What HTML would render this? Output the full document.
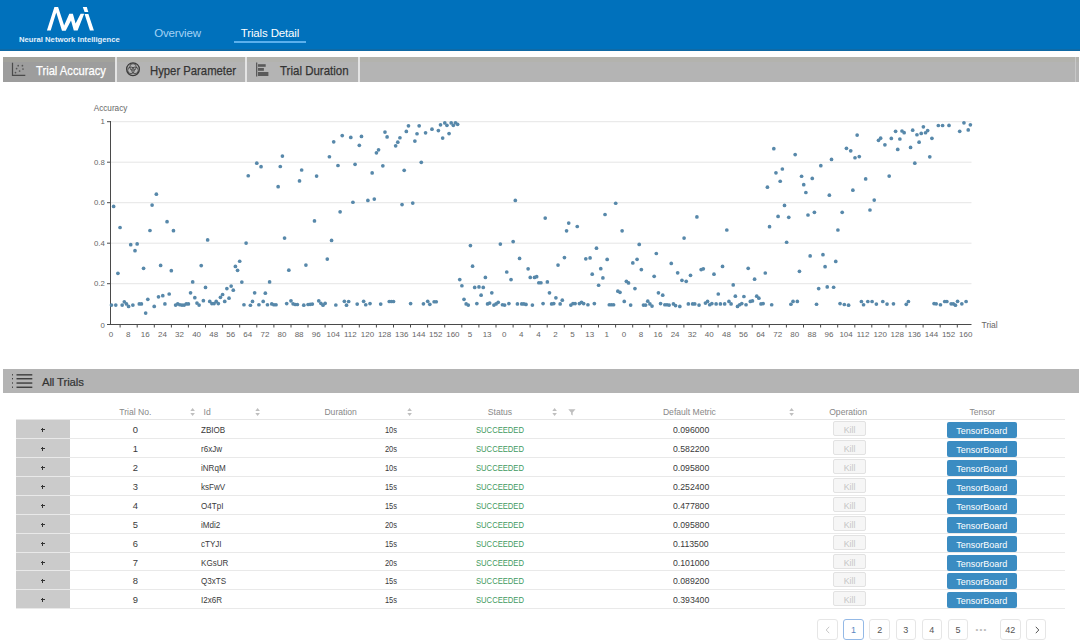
<!DOCTYPE html>
<html><head><meta charset="utf-8">
<style>
*{margin:0;padding:0;box-sizing:border-box}
html,body{width:1080px;height:641px;overflow:hidden;background:#fff;font-family:"Liberation Sans",sans-serif;color:#333}
.abs{position:absolute}
.nw{white-space:nowrap}
#hdr{position:absolute;left:0;top:0;width:1080px;height:50.5px;background:#0071bc}
.nav{position:absolute;top:24.8px;font-size:11.5px;line-height:16px;white-space:nowrap;letter-spacing:-0.15px}
#tabs{position:absolute;left:3px;top:57px;width:1076px;height:25px;background:#b4b4b4}
.tab{position:absolute;top:1px;height:25px;font-size:13.5px;line-height:25px;-webkit-text-stroke:0.25px currentColor;white-space:nowrap;color:#333;transform-origin:0 50%}
.sep{position:absolute;top:0;width:2px;height:25px;background:#e4e4e4}
#alltr{position:absolute;left:3px;top:369px;width:1075.5px;height:24px;background:#b4b4b4}
.th{position:absolute;top:404.7px;font-size:8.6px;line-height:14px;color:#888;white-space:nowrap}
.row{position:absolute;left:16px;width:1049px;border-bottom:1px solid #e9e9e9}
.plus{position:absolute;left:0;top:0;width:53.6px;background:#cbcbcb}
.plus:before{content:"";position:absolute;left:24.6px;top:9.3px;width:4.4px;height:1px;background:#333}
.plus:after{content:"";position:absolute;left:26.3px;top:7.7px;width:1px;height:4.2px;background:#333}
.td{position:absolute;top:0.55px;font-size:9.4px;line-height:18px;white-space:nowrap;color:#3a3a3a}
.suc{color:#3f9a60}
.kill{position:absolute;left:817.3px;top:1.1px;width:32.4px;height:15.4px;border:1px solid #e2e2e2;background:#f6f6f6;border-radius:2px;font-size:8.8px;line-height:16.2px;text-align:center;color:#c6c6c6}
.tb{position:absolute;left:930.7px;top:1.6px;width:70.1px;height:16.6px;background:#3b8cc2;border-radius:2px;font-size:9px;line-height:19.8px;text-align:center;color:#fff}
.pg{position:absolute;top:619.3px;width:20.5px;height:21px;border:1px solid #e6e6e6;border-radius:3px;font-size:9px;line-height:21px;text-align:center;color:#555;background:#fff}
</style></head>
<body>
<div id="hdr"></div><div class="abs" style="left:0;top:49px;width:1080px;height:1.5px;background:#0f6aa6"></div>
<svg class="abs" style="left:0;top:0" width="120" height="50" viewBox="0 0 120 50"><path fill="#fff" d="M46.9,30.5 L54.4,7.1 L58.1,7.1 L65.8,30.5 L61.9,30.5 L56.25,12.6 L50.7,30.5 Z"/><path fill="#fff" d="M61.9,30.5 L69.3,13.7 L72.9,13.7 L75.6,23.4 L80.6,13.7 L84.2,13.7 L77.6,30.5 L73.8,30.5 L71.0,20.6 L65.8,30.5 Z"/><path fill="#fff" d="M82.8,7.1 L86.8,7.1 L88.3,12.1 L84.6,12.1 Z"/><path fill="#fff" d="M84.6,13.9 L88.4,13.9 L93.9,30.5 L89.9,30.5 Z"/></svg>
<div class="abs nw" style="left:19px;top:33.5px;font-size:7.7px;font-weight:bold;color:#e3f0fb;line-height:11px">Neural Network Intelligence</div>
<div class="nav" style="left:154.2px;color:#a3d2f5">Overview</div>
<div class="nav" style="left:240.8px;color:#fff">Trials Detail</div>
<div class="abs" style="left:234.2px;top:41.3px;width:71.6px;height:2px;background:#5cb0ec"></div>
<svg class="abs" style="left:0;top:0" width="1080" height="360" viewBox="0 0 1080 360">
<g stroke="#e5e5e5" stroke-width="1">
<line x1="111" y1="121.7" x2="971.5" y2="121.7"/>
<line x1="111" y1="162.2" x2="971.5" y2="162.2"/>
<line x1="111" y1="202.7" x2="971.5" y2="202.7"/>
<line x1="111" y1="243.2" x2="971.5" y2="243.2"/>
<line x1="111" y1="283.7" x2="971.5" y2="283.7"/>
</g>
<g stroke="#4a4a4a" stroke-width="1">
<line x1="110.5" y1="121" x2="110.5" y2="325"/>
<line x1="107" y1="121.7" x2="110.5" y2="121.7"/>
<line x1="107" y1="162.2" x2="110.5" y2="162.2"/>
<line x1="107" y1="202.7" x2="110.5" y2="202.7"/>
<line x1="107" y1="243.2" x2="110.5" y2="243.2"/>
<line x1="107" y1="283.7" x2="110.5" y2="283.7"/>
<line x1="107" y1="324.5" x2="110.5" y2="324.5"/>
<line x1="107" y1="324.5" x2="971.5" y2="324.5"/>
<line x1="120.1" y1="324.5" x2="120.1" y2="327.5"/>
<line x1="137.2" y1="324.5" x2="137.2" y2="327.5"/>
<line x1="154.3" y1="324.5" x2="154.3" y2="327.5"/>
<line x1="171.4" y1="324.5" x2="171.4" y2="327.5"/>
<line x1="188.4" y1="324.5" x2="188.4" y2="327.5"/>
<line x1="205.5" y1="324.5" x2="205.5" y2="327.5"/>
<line x1="222.6" y1="324.5" x2="222.6" y2="327.5"/>
<line x1="239.7" y1="324.5" x2="239.7" y2="327.5"/>
<line x1="256.8" y1="324.5" x2="256.8" y2="327.5"/>
<line x1="273.9" y1="324.5" x2="273.9" y2="327.5"/>
<line x1="291.0" y1="324.5" x2="291.0" y2="327.5"/>
<line x1="308.0" y1="324.5" x2="308.0" y2="327.5"/>
<line x1="325.1" y1="324.5" x2="325.1" y2="327.5"/>
<line x1="342.2" y1="324.5" x2="342.2" y2="327.5"/>
<line x1="359.3" y1="324.5" x2="359.3" y2="327.5"/>
<line x1="376.4" y1="324.5" x2="376.4" y2="327.5"/>
<line x1="393.5" y1="324.5" x2="393.5" y2="327.5"/>
<line x1="410.5" y1="324.5" x2="410.5" y2="327.5"/>
<line x1="427.6" y1="324.5" x2="427.6" y2="327.5"/>
<line x1="444.7" y1="324.5" x2="444.7" y2="327.5"/>
<line x1="461.8" y1="324.5" x2="461.8" y2="327.5"/>
<line x1="478.9" y1="324.5" x2="478.9" y2="327.5"/>
<line x1="496.0" y1="324.5" x2="496.0" y2="327.5"/>
<line x1="513.1" y1="324.5" x2="513.1" y2="327.5"/>
<line x1="530.1" y1="324.5" x2="530.1" y2="327.5"/>
<line x1="547.2" y1="324.5" x2="547.2" y2="327.5"/>
<line x1="564.3" y1="324.5" x2="564.3" y2="327.5"/>
<line x1="581.4" y1="324.5" x2="581.4" y2="327.5"/>
<line x1="598.5" y1="324.5" x2="598.5" y2="327.5"/>
<line x1="615.6" y1="324.5" x2="615.6" y2="327.5"/>
<line x1="632.7" y1="324.5" x2="632.7" y2="327.5"/>
<line x1="649.7" y1="324.5" x2="649.7" y2="327.5"/>
<line x1="666.8" y1="324.5" x2="666.8" y2="327.5"/>
<line x1="683.9" y1="324.5" x2="683.9" y2="327.5"/>
<line x1="701.0" y1="324.5" x2="701.0" y2="327.5"/>
<line x1="718.1" y1="324.5" x2="718.1" y2="327.5"/>
<line x1="735.2" y1="324.5" x2="735.2" y2="327.5"/>
<line x1="752.2" y1="324.5" x2="752.2" y2="327.5"/>
<line x1="769.3" y1="324.5" x2="769.3" y2="327.5"/>
<line x1="786.4" y1="324.5" x2="786.4" y2="327.5"/>
<line x1="803.5" y1="324.5" x2="803.5" y2="327.5"/>
<line x1="820.6" y1="324.5" x2="820.6" y2="327.5"/>
<line x1="837.7" y1="324.5" x2="837.7" y2="327.5"/>
<line x1="854.8" y1="324.5" x2="854.8" y2="327.5"/>
<line x1="871.8" y1="324.5" x2="871.8" y2="327.5"/>
<line x1="888.9" y1="324.5" x2="888.9" y2="327.5"/>
<line x1="906.0" y1="324.5" x2="906.0" y2="327.5"/>
<line x1="923.1" y1="324.5" x2="923.1" y2="327.5"/>
<line x1="940.2" y1="324.5" x2="940.2" y2="327.5"/>
<line x1="957.3" y1="324.5" x2="957.3" y2="327.5"/>
</g>
<g font-family="Liberation Sans" font-size="7.8" fill="#666" text-anchor="end">
<text x="104.8" y="124.2">1</text>
<text x="104.8" y="164.7">0.8</text>
<text x="104.8" y="205.2">0.6</text>
<text x="104.8" y="245.7">0.4</text>
<text x="104.8" y="286.2">0.2</text>
<text x="104.8" y="327.6">0</text>
</g>
<g font-family="Liberation Sans" font-size="8" fill="#666" text-anchor="middle">
<text x="111.1" y="336.8">0</text>
<text x="128.2" y="336.8">8</text>
<text x="145.3" y="336.8">16</text>
<text x="162.4" y="336.8">24</text>
<text x="179.5" y="336.8">32</text>
<text x="196.6" y="336.8">40</text>
<text x="213.7" y="336.8">48</text>
<text x="230.7" y="336.8">56</text>
<text x="247.8" y="336.8">64</text>
<text x="264.9" y="336.8">72</text>
<text x="282.0" y="336.8">80</text>
<text x="299.1" y="336.8">88</text>
<text x="316.2" y="336.8">96</text>
<text x="333.3" y="336.8">104</text>
<text x="350.4" y="336.8">112</text>
<text x="367.5" y="336.8">120</text>
<text x="384.6" y="336.8">128</text>
<text x="401.7" y="336.8">136</text>
<text x="418.8" y="336.8">144</text>
<text x="435.8" y="336.8">152</text>
<text x="452.9" y="336.8">160</text>
<text x="470.0" y="336.8">5</text>
<text x="487.1" y="336.8">13</text>
<text x="504.2" y="336.8">0</text>
<text x="521.3" y="336.8">4</text>
<text x="538.4" y="336.8">4</text>
<text x="555.5" y="336.8">2</text>
<text x="572.6" y="336.8">5</text>
<text x="589.7" y="336.8">13</text>
<text x="606.8" y="336.8">1</text>
<text x="623.9" y="336.8">0</text>
<text x="641.0" y="336.8">8</text>
<text x="658.0" y="336.8">16</text>
<text x="675.1" y="336.8">24</text>
<text x="692.2" y="336.8">32</text>
<text x="709.3" y="336.8">40</text>
<text x="726.4" y="336.8">48</text>
<text x="743.5" y="336.8">56</text>
<text x="760.6" y="336.8">64</text>
<text x="777.7" y="336.8">72</text>
<text x="794.8" y="336.8">80</text>
<text x="811.9" y="336.8">88</text>
<text x="829.0" y="336.8">96</text>
<text x="846.1" y="336.8">104</text>
<text x="863.1" y="336.8">112</text>
<text x="880.2" y="336.8">120</text>
<text x="897.3" y="336.8">128</text>
<text x="914.4" y="336.8">136</text>
<text x="931.5" y="336.8">144</text>
<text x="948.6" y="336.8">152</text>
<text x="965.7" y="336.8">160</text>
</g>
<text x="93.7" y="110.6" font-family="Liberation Sans" font-size="8.2" fill="#666">Accuracy</text>
<text x="981.5" y="327.6" font-family="Liberation Sans" font-size="8.5" fill="#666">Trial</text>
<g fill="#5788aa">
<circle cx="111.50" cy="305.10" r="1.85"/>
<circle cx="113.64" cy="206.38" r="1.85"/>
<circle cx="115.77" cy="305.10" r="1.85"/>
<circle cx="117.91" cy="273.34" r="1.85"/>
<circle cx="120.05" cy="227.51" r="1.85"/>
<circle cx="122.18" cy="305.10" r="1.85"/>
<circle cx="124.32" cy="301.79" r="1.85"/>
<circle cx="126.46" cy="303.94" r="1.85"/>
<circle cx="128.59" cy="306.42" r="1.85"/>
<circle cx="130.73" cy="244.72" r="1.85"/>
<circle cx="132.87" cy="305.10" r="1.85"/>
<circle cx="135.00" cy="250.67" r="1.85"/>
<circle cx="137.14" cy="243.89" r="1.85"/>
<circle cx="139.27" cy="303.94" r="1.85"/>
<circle cx="141.41" cy="303.94" r="1.85"/>
<circle cx="143.55" cy="268.37" r="1.85"/>
<circle cx="145.68" cy="313.04" r="1.85"/>
<circle cx="147.82" cy="299.31" r="1.85"/>
<circle cx="149.96" cy="230.49" r="1.85"/>
<circle cx="152.09" cy="205.05" r="1.85"/>
<circle cx="154.23" cy="306.42" r="1.85"/>
<circle cx="156.37" cy="194.14" r="1.85"/>
<circle cx="158.50" cy="296.83" r="1.85"/>
<circle cx="160.64" cy="265.40" r="1.85"/>
<circle cx="162.78" cy="295.67" r="1.85"/>
<circle cx="164.91" cy="303.94" r="1.85"/>
<circle cx="167.05" cy="221.72" r="1.85"/>
<circle cx="169.19" cy="294.01" r="1.85"/>
<circle cx="171.32" cy="270.69" r="1.85"/>
<circle cx="173.46" cy="230.66" r="1.85"/>
<circle cx="175.59" cy="305.10" r="1.85"/>
<circle cx="177.73" cy="303.94" r="1.85"/>
<circle cx="179.87" cy="304.77" r="1.85"/>
<circle cx="182.00" cy="305.10" r="1.85"/>
<circle cx="184.14" cy="305.10" r="1.85"/>
<circle cx="186.28" cy="303.94" r="1.85"/>
<circle cx="188.41" cy="303.94" r="1.85"/>
<circle cx="190.55" cy="292.86" r="1.85"/>
<circle cx="192.69" cy="281.94" r="1.85"/>
<circle cx="194.82" cy="297.65" r="1.85"/>
<circle cx="196.96" cy="303.11" r="1.85"/>
<circle cx="199.10" cy="305.10" r="1.85"/>
<circle cx="201.23" cy="265.56" r="1.85"/>
<circle cx="203.37" cy="300.63" r="1.85"/>
<circle cx="205.51" cy="287.40" r="1.85"/>
<circle cx="207.64" cy="239.92" r="1.85"/>
<circle cx="209.78" cy="301.46" r="1.85"/>
<circle cx="211.92" cy="303.61" r="1.85"/>
<circle cx="214.05" cy="303.61" r="1.85"/>
<circle cx="216.19" cy="301.46" r="1.85"/>
<circle cx="218.32" cy="303.61" r="1.85"/>
<circle cx="220.46" cy="297.32" r="1.85"/>
<circle cx="222.60" cy="294.51" r="1.85"/>
<circle cx="224.73" cy="301.46" r="1.85"/>
<circle cx="226.87" cy="288.56" r="1.85"/>
<circle cx="229.01" cy="298.15" r="1.85"/>
<circle cx="231.14" cy="286.07" r="1.85"/>
<circle cx="233.28" cy="290.21" r="1.85"/>
<circle cx="235.42" cy="266.39" r="1.85"/>
<circle cx="237.55" cy="270.36" r="1.85"/>
<circle cx="239.69" cy="261.26" r="1.85"/>
<circle cx="241.83" cy="282.10" r="1.85"/>
<circle cx="243.96" cy="304.77" r="1.85"/>
<circle cx="246.10" cy="243.06" r="1.85"/>
<circle cx="248.24" cy="175.77" r="1.85"/>
<circle cx="250.37" cy="305.26" r="1.85"/>
<circle cx="252.51" cy="301.46" r="1.85"/>
<circle cx="254.65" cy="292.86" r="1.85"/>
<circle cx="256.78" cy="163.20" r="1.85"/>
<circle cx="258.92" cy="304.77" r="1.85"/>
<circle cx="261.05" cy="166.67" r="1.85"/>
<circle cx="263.19" cy="301.46" r="1.85"/>
<circle cx="265.33" cy="293.19" r="1.85"/>
<circle cx="267.46" cy="304.77" r="1.85"/>
<circle cx="269.60" cy="281.94" r="1.85"/>
<circle cx="271.74" cy="303.94" r="1.85"/>
<circle cx="273.87" cy="304.77" r="1.85"/>
<circle cx="276.01" cy="304.77" r="1.85"/>
<circle cx="278.15" cy="186.69" r="1.85"/>
<circle cx="280.28" cy="166.51" r="1.85"/>
<circle cx="282.42" cy="156.09" r="1.85"/>
<circle cx="284.56" cy="238.10" r="1.85"/>
<circle cx="286.69" cy="303.59" r="1.85"/>
<circle cx="288.83" cy="270.19" r="1.85"/>
<circle cx="290.97" cy="300.82" r="1.85"/>
<circle cx="293.10" cy="303.83" r="1.85"/>
<circle cx="295.24" cy="304.52" r="1.85"/>
<circle cx="297.38" cy="304.52" r="1.85"/>
<circle cx="299.51" cy="180.90" r="1.85"/>
<circle cx="301.65" cy="169.98" r="1.85"/>
<circle cx="303.78" cy="305.21" r="1.85"/>
<circle cx="305.92" cy="265.07" r="1.85"/>
<circle cx="308.06" cy="304.52" r="1.85"/>
<circle cx="310.19" cy="304.29" r="1.85"/>
<circle cx="312.33" cy="304.06" r="1.85"/>
<circle cx="314.47" cy="220.90" r="1.85"/>
<circle cx="316.60" cy="176.10" r="1.85"/>
<circle cx="318.74" cy="300.82" r="1.85"/>
<circle cx="320.88" cy="303.36" r="1.85"/>
<circle cx="323.01" cy="305.21" r="1.85"/>
<circle cx="325.15" cy="303.36" r="1.85"/>
<circle cx="327.29" cy="259.11" r="1.85"/>
<circle cx="329.42" cy="156.75" r="1.85"/>
<circle cx="331.56" cy="240.42" r="1.85"/>
<circle cx="333.70" cy="141.86" r="1.85"/>
<circle cx="335.83" cy="304.98" r="1.85"/>
<circle cx="337.97" cy="165.52" r="1.85"/>
<circle cx="340.11" cy="211.84" r="1.85"/>
<circle cx="342.24" cy="135.57" r="1.85"/>
<circle cx="344.38" cy="301.28" r="1.85"/>
<circle cx="346.51" cy="305.21" r="1.85"/>
<circle cx="348.65" cy="301.51" r="1.85"/>
<circle cx="350.79" cy="137.39" r="1.85"/>
<circle cx="352.92" cy="202.24" r="1.85"/>
<circle cx="355.06" cy="164.36" r="1.85"/>
<circle cx="357.20" cy="304.06" r="1.85"/>
<circle cx="359.33" cy="145.33" r="1.85"/>
<circle cx="361.47" cy="136.40" r="1.85"/>
<circle cx="363.61" cy="301.28" r="1.85"/>
<circle cx="365.74" cy="304.75" r="1.85"/>
<circle cx="367.88" cy="200.42" r="1.85"/>
<circle cx="370.02" cy="303.59" r="1.85"/>
<circle cx="372.15" cy="172.96" r="1.85"/>
<circle cx="374.29" cy="199.10" r="1.85"/>
<circle cx="376.43" cy="152.78" r="1.85"/>
<circle cx="378.56" cy="149.80" r="1.85"/>
<circle cx="380.70" cy="304.06" r="1.85"/>
<circle cx="382.84" cy="165.85" r="1.85"/>
<circle cx="384.97" cy="132.10" r="1.85"/>
<circle cx="387.11" cy="136.90" r="1.85"/>
<circle cx="389.25" cy="301.51" r="1.85"/>
<circle cx="391.38" cy="301.51" r="1.85"/>
<circle cx="393.52" cy="301.51" r="1.85"/>
<circle cx="395.65" cy="145.83" r="1.85"/>
<circle cx="397.79" cy="142.19" r="1.85"/>
<circle cx="399.93" cy="137.73" r="1.85"/>
<circle cx="402.06" cy="204.56" r="1.85"/>
<circle cx="404.20" cy="170.31" r="1.85"/>
<circle cx="406.34" cy="131.44" r="1.85"/>
<circle cx="408.47" cy="125.81" r="1.85"/>
<circle cx="410.61" cy="303.59" r="1.85"/>
<circle cx="412.75" cy="203.07" r="1.85"/>
<circle cx="414.88" cy="141.03" r="1.85"/>
<circle cx="417.02" cy="133.75" r="1.85"/>
<circle cx="419.16" cy="125.78" r="1.85"/>
<circle cx="421.29" cy="162.37" r="1.85"/>
<circle cx="423.43" cy="303.83" r="1.85"/>
<circle cx="425.57" cy="132.84" r="1.85"/>
<circle cx="427.70" cy="301.28" r="1.85"/>
<circle cx="429.84" cy="304.29" r="1.85"/>
<circle cx="431.97" cy="129.17" r="1.85"/>
<circle cx="434.11" cy="301.74" r="1.85"/>
<circle cx="436.25" cy="301.74" r="1.85"/>
<circle cx="438.38" cy="130.61" r="1.85"/>
<circle cx="440.52" cy="124.82" r="1.85"/>
<circle cx="442.66" cy="138.12" r="1.85"/>
<circle cx="444.79" cy="122.96" r="1.85"/>
<circle cx="446.93" cy="125.28" r="1.85"/>
<circle cx="449.07" cy="133.61" r="1.85"/>
<circle cx="451.20" cy="122.96" r="1.85"/>
<circle cx="453.34" cy="125.28" r="1.85"/>
<circle cx="455.48" cy="122.73" r="1.85"/>
<circle cx="457.61" cy="124.35" r="1.85"/>
<circle cx="459.75" cy="279.62" r="1.85"/>
<circle cx="461.89" cy="285.74" r="1.85"/>
<circle cx="464.02" cy="299.31" r="1.85"/>
<circle cx="466.16" cy="303.94" r="1.85"/>
<circle cx="468.30" cy="305.10" r="1.85"/>
<circle cx="470.43" cy="245.54" r="1.85"/>
<circle cx="472.57" cy="266.22" r="1.85"/>
<circle cx="474.70" cy="287.40" r="1.85"/>
<circle cx="476.84" cy="303.61" r="1.85"/>
<circle cx="478.98" cy="286.90" r="1.85"/>
<circle cx="481.11" cy="295.17" r="1.85"/>
<circle cx="483.25" cy="287.40" r="1.85"/>
<circle cx="485.39" cy="277.47" r="1.85"/>
<circle cx="487.52" cy="303.94" r="1.85"/>
<circle cx="489.66" cy="303.11" r="1.85"/>
<circle cx="491.80" cy="292.86" r="1.85"/>
<circle cx="493.93" cy="305.10" r="1.85"/>
<circle cx="496.07" cy="303.94" r="1.85"/>
<circle cx="498.21" cy="302.29" r="1.85"/>
<circle cx="500.34" cy="244.06" r="1.85"/>
<circle cx="502.48" cy="304.77" r="1.85"/>
<circle cx="504.62" cy="305.10" r="1.85"/>
<circle cx="506.75" cy="272.01" r="1.85"/>
<circle cx="508.89" cy="303.61" r="1.85"/>
<circle cx="511.03" cy="279.62" r="1.85"/>
<circle cx="513.16" cy="241.57" r="1.85"/>
<circle cx="515.30" cy="200.42" r="1.85"/>
<circle cx="517.43" cy="303.94" r="1.85"/>
<circle cx="519.57" cy="258.45" r="1.85"/>
<circle cx="521.71" cy="303.94" r="1.85"/>
<circle cx="523.84" cy="303.94" r="1.85"/>
<circle cx="525.98" cy="304.44" r="1.85"/>
<circle cx="528.12" cy="268.87" r="1.85"/>
<circle cx="530.25" cy="277.47" r="1.85"/>
<circle cx="532.39" cy="305.10" r="1.85"/>
<circle cx="534.53" cy="277.47" r="1.85"/>
<circle cx="536.66" cy="276.64" r="1.85"/>
<circle cx="538.80" cy="282.77" r="1.85"/>
<circle cx="540.94" cy="282.77" r="1.85"/>
<circle cx="543.07" cy="303.61" r="1.85"/>
<circle cx="545.21" cy="218.12" r="1.85"/>
<circle cx="547.35" cy="281.94" r="1.85"/>
<circle cx="549.48" cy="292.86" r="1.85"/>
<circle cx="551.62" cy="303.94" r="1.85"/>
<circle cx="553.76" cy="303.61" r="1.85"/>
<circle cx="555.89" cy="297.82" r="1.85"/>
<circle cx="558.03" cy="265.07" r="1.85"/>
<circle cx="560.16" cy="303.94" r="1.85"/>
<circle cx="562.30" cy="300.14" r="1.85"/>
<circle cx="564.44" cy="257.62" r="1.85"/>
<circle cx="566.57" cy="230.82" r="1.85"/>
<circle cx="568.71" cy="223.05" r="1.85"/>
<circle cx="570.85" cy="305.10" r="1.85"/>
<circle cx="572.98" cy="303.61" r="1.85"/>
<circle cx="575.12" cy="303.61" r="1.85"/>
<circle cx="577.26" cy="226.52" r="1.85"/>
<circle cx="579.39" cy="303.61" r="1.85"/>
<circle cx="581.53" cy="302.29" r="1.85"/>
<circle cx="583.67" cy="303.61" r="1.85"/>
<circle cx="585.80" cy="258.78" r="1.85"/>
<circle cx="587.94" cy="304.77" r="1.85"/>
<circle cx="590.08" cy="257.95" r="1.85"/>
<circle cx="592.21" cy="274.16" r="1.85"/>
<circle cx="594.35" cy="303.61" r="1.85"/>
<circle cx="596.49" cy="248.19" r="1.85"/>
<circle cx="598.62" cy="285.25" r="1.85"/>
<circle cx="600.76" cy="268.70" r="1.85"/>
<circle cx="602.89" cy="277.97" r="1.85"/>
<circle cx="605.03" cy="214.48" r="1.85"/>
<circle cx="607.17" cy="259.44" r="1.85"/>
<circle cx="609.30" cy="304.77" r="1.85"/>
<circle cx="611.44" cy="304.77" r="1.85"/>
<circle cx="613.58" cy="304.77" r="1.85"/>
<circle cx="615.71" cy="203.23" r="1.85"/>
<circle cx="617.85" cy="291.20" r="1.85"/>
<circle cx="619.99" cy="292.36" r="1.85"/>
<circle cx="622.12" cy="230.82" r="1.85"/>
<circle cx="624.26" cy="301.46" r="1.85"/>
<circle cx="626.40" cy="281.28" r="1.85"/>
<circle cx="628.53" cy="282.93" r="1.85"/>
<circle cx="630.67" cy="305.10" r="1.85"/>
<circle cx="632.81" cy="262.91" r="1.85"/>
<circle cx="634.94" cy="288.56" r="1.85"/>
<circle cx="637.08" cy="259.28" r="1.85"/>
<circle cx="639.22" cy="244.39" r="1.85"/>
<circle cx="641.35" cy="269.53" r="1.85"/>
<circle cx="643.49" cy="305.10" r="1.85"/>
<circle cx="645.62" cy="305.10" r="1.85"/>
<circle cx="647.76" cy="301.13" r="1.85"/>
<circle cx="649.90" cy="303.94" r="1.85"/>
<circle cx="652.03" cy="306.09" r="1.85"/>
<circle cx="654.17" cy="276.31" r="1.85"/>
<circle cx="656.31" cy="253.49" r="1.85"/>
<circle cx="658.44" cy="292.86" r="1.85"/>
<circle cx="660.58" cy="303.61" r="1.85"/>
<circle cx="662.72" cy="295.17" r="1.85"/>
<circle cx="664.85" cy="304.77" r="1.85"/>
<circle cx="666.99" cy="304.77" r="1.85"/>
<circle cx="669.13" cy="305.10" r="1.85"/>
<circle cx="671.26" cy="263.41" r="1.85"/>
<circle cx="673.40" cy="303.94" r="1.85"/>
<circle cx="675.54" cy="305.59" r="1.85"/>
<circle cx="677.67" cy="272.84" r="1.85"/>
<circle cx="679.81" cy="306.42" r="1.85"/>
<circle cx="681.95" cy="280.28" r="1.85"/>
<circle cx="684.08" cy="238.10" r="1.85"/>
<circle cx="686.22" cy="281.28" r="1.85"/>
<circle cx="688.35" cy="303.94" r="1.85"/>
<circle cx="690.49" cy="275.32" r="1.85"/>
<circle cx="692.63" cy="303.94" r="1.85"/>
<circle cx="694.76" cy="303.94" r="1.85"/>
<circle cx="696.90" cy="216.96" r="1.85"/>
<circle cx="699.04" cy="305.10" r="1.85"/>
<circle cx="701.17" cy="269.53" r="1.85"/>
<circle cx="703.31" cy="268.87" r="1.85"/>
<circle cx="705.45" cy="303.11" r="1.85"/>
<circle cx="707.58" cy="301.46" r="1.85"/>
<circle cx="709.72" cy="304.77" r="1.85"/>
<circle cx="711.86" cy="303.61" r="1.85"/>
<circle cx="713.99" cy="274.16" r="1.85"/>
<circle cx="716.13" cy="303.94" r="1.85"/>
<circle cx="718.27" cy="294.01" r="1.85"/>
<circle cx="720.40" cy="303.94" r="1.85"/>
<circle cx="722.54" cy="266.39" r="1.85"/>
<circle cx="724.68" cy="303.94" r="1.85"/>
<circle cx="726.81" cy="229.99" r="1.85"/>
<circle cx="728.95" cy="301.46" r="1.85"/>
<circle cx="731.08" cy="303.94" r="1.85"/>
<circle cx="733.22" cy="284.92" r="1.85"/>
<circle cx="735.36" cy="296.17" r="1.85"/>
<circle cx="737.49" cy="306.42" r="1.85"/>
<circle cx="739.63" cy="304.77" r="1.85"/>
<circle cx="741.77" cy="303.61" r="1.85"/>
<circle cx="743.90" cy="296.50" r="1.85"/>
<circle cx="746.04" cy="304.77" r="1.85"/>
<circle cx="748.18" cy="268.37" r="1.85"/>
<circle cx="750.31" cy="301.46" r="1.85"/>
<circle cx="752.45" cy="300.96" r="1.85"/>
<circle cx="754.59" cy="279.13" r="1.85"/>
<circle cx="756.72" cy="296.17" r="1.85"/>
<circle cx="758.86" cy="298.15" r="1.85"/>
<circle cx="761.00" cy="303.94" r="1.85"/>
<circle cx="763.13" cy="303.61" r="1.85"/>
<circle cx="765.27" cy="273.01" r="1.85"/>
<circle cx="767.41" cy="187.19" r="1.85"/>
<circle cx="769.54" cy="226.69" r="1.85"/>
<circle cx="771.68" cy="304.77" r="1.85"/>
<circle cx="773.81" cy="148.64" r="1.85"/>
<circle cx="775.95" cy="172.80" r="1.85"/>
<circle cx="778.09" cy="216.47" r="1.85"/>
<circle cx="780.22" cy="181.23" r="1.85"/>
<circle cx="782.36" cy="168.99" r="1.85"/>
<circle cx="784.50" cy="205.38" r="1.85"/>
<circle cx="786.63" cy="242.24" r="1.85"/>
<circle cx="788.77" cy="217.29" r="1.85"/>
<circle cx="790.91" cy="304.27" r="1.85"/>
<circle cx="793.04" cy="301.46" r="1.85"/>
<circle cx="795.18" cy="154.60" r="1.85"/>
<circle cx="797.32" cy="301.46" r="1.85"/>
<circle cx="799.45" cy="271.35" r="1.85"/>
<circle cx="801.59" cy="176.27" r="1.85"/>
<circle cx="803.73" cy="184.71" r="1.85"/>
<circle cx="805.86" cy="192.48" r="1.85"/>
<circle cx="808.00" cy="214.98" r="1.85"/>
<circle cx="810.14" cy="255.97" r="1.85"/>
<circle cx="812.27" cy="178.42" r="1.85"/>
<circle cx="814.41" cy="212.33" r="1.85"/>
<circle cx="816.54" cy="304.27" r="1.85"/>
<circle cx="818.68" cy="288.56" r="1.85"/>
<circle cx="820.82" cy="165.68" r="1.85"/>
<circle cx="822.95" cy="254.64" r="1.85"/>
<circle cx="825.09" cy="266.72" r="1.85"/>
<circle cx="827.23" cy="286.90" r="1.85"/>
<circle cx="829.36" cy="195.13" r="1.85"/>
<circle cx="831.50" cy="159.40" r="1.85"/>
<circle cx="833.64" cy="287.23" r="1.85"/>
<circle cx="835.77" cy="261.43" r="1.85"/>
<circle cx="837.91" cy="229.99" r="1.85"/>
<circle cx="840.05" cy="303.59" r="1.85"/>
<circle cx="842.18" cy="212.33" r="1.85"/>
<circle cx="844.32" cy="304.52" r="1.85"/>
<circle cx="846.46" cy="148.31" r="1.85"/>
<circle cx="848.59" cy="305.21" r="1.85"/>
<circle cx="850.73" cy="150.79" r="1.85"/>
<circle cx="852.87" cy="190.17" r="1.85"/>
<circle cx="855.00" cy="157.74" r="1.85"/>
<circle cx="857.14" cy="135.08" r="1.85"/>
<circle cx="859.27" cy="156.58" r="1.85"/>
<circle cx="861.41" cy="301.51" r="1.85"/>
<circle cx="863.55" cy="304.75" r="1.85"/>
<circle cx="865.68" cy="178.92" r="1.85"/>
<circle cx="867.82" cy="301.51" r="1.85"/>
<circle cx="869.96" cy="210.02" r="1.85"/>
<circle cx="872.09" cy="301.51" r="1.85"/>
<circle cx="874.23" cy="200.09" r="1.85"/>
<circle cx="876.37" cy="304.06" r="1.85"/>
<circle cx="878.50" cy="140.35" r="1.85"/>
<circle cx="880.64" cy="138.20" r="1.85"/>
<circle cx="882.78" cy="301.51" r="1.85"/>
<circle cx="884.91" cy="144.80" r="1.85"/>
<circle cx="887.05" cy="304.06" r="1.85"/>
<circle cx="889.19" cy="176.10" r="1.85"/>
<circle cx="891.32" cy="138.43" r="1.85"/>
<circle cx="893.46" cy="303.83" r="1.85"/>
<circle cx="895.60" cy="131.31" r="1.85"/>
<circle cx="897.73" cy="149.44" r="1.85"/>
<circle cx="899.87" cy="138.99" r="1.85"/>
<circle cx="902.00" cy="131.00" r="1.85"/>
<circle cx="904.14" cy="132.67" r="1.85"/>
<circle cx="906.28" cy="304.29" r="1.85"/>
<circle cx="908.41" cy="301.51" r="1.85"/>
<circle cx="910.55" cy="147.38" r="1.85"/>
<circle cx="912.69" cy="130.13" r="1.85"/>
<circle cx="914.82" cy="163.20" r="1.85"/>
<circle cx="916.96" cy="134.76" r="1.85"/>
<circle cx="919.10" cy="142.18" r="1.85"/>
<circle cx="921.23" cy="133.40" r="1.85"/>
<circle cx="923.37" cy="126.85" r="1.85"/>
<circle cx="925.51" cy="132.76" r="1.85"/>
<circle cx="927.64" cy="130.61" r="1.85"/>
<circle cx="929.78" cy="156.78" r="1.85"/>
<circle cx="931.92" cy="138.34" r="1.85"/>
<circle cx="934.05" cy="303.59" r="1.85"/>
<circle cx="936.19" cy="303.83" r="1.85"/>
<circle cx="938.33" cy="125.50" r="1.85"/>
<circle cx="940.46" cy="304.75" r="1.85"/>
<circle cx="942.60" cy="125.50" r="1.85"/>
<circle cx="944.73" cy="301.51" r="1.85"/>
<circle cx="946.87" cy="301.51" r="1.85"/>
<circle cx="949.01" cy="125.40" r="1.85"/>
<circle cx="951.14" cy="303.83" r="1.85"/>
<circle cx="953.28" cy="303.83" r="1.85"/>
<circle cx="955.42" cy="305.21" r="1.85"/>
<circle cx="957.55" cy="301.28" r="1.85"/>
<circle cx="959.69" cy="131.31" r="1.85"/>
<circle cx="961.83" cy="303.83" r="1.85"/>
<circle cx="963.96" cy="122.79" r="1.85"/>
<circle cx="966.10" cy="301.51" r="1.85"/>
<circle cx="968.24" cy="129.95" r="1.85"/>
<circle cx="970.37" cy="124.80" r="1.85"/>
</g></svg>
<div id="tabs">
<div class="abs" style="left:0;top:0;width:1076px;height:5px;background:#b3b3ae"></div>
<div class="abs" style="left:0;top:0;width:112px;height:25px;background:#9d9d9d"></div>
<div class="abs" style="left:0;top:0;width:112px;height:5px;background:#a2a29c"></div>
<div class="sep" style="left:112px;width:1.6px"></div>
<div class="sep" style="left:242.3px;width:1.4px"></div>
<div class="sep" style="left:355.3px;width:1.4px"></div>
<div class="sep" style="left:1072px;width:1px;background:#c8c8c8"></div>
<svg class="abs" style="left:0;top:0" width="370" height="25" viewBox="3 57 370 25"><path d="M12.5,62.8 V75.3 H25.3" fill="none" stroke="#4a4a4a" stroke-width="1.2"/><g fill="#555"><circle cx="18.2" cy="65.7" r="0.85"/><circle cx="22.4" cy="65.7" r="0.85"/><circle cx="16.6" cy="68.6" r="0.85"/><circle cx="23" cy="69" r="0.85"/><circle cx="19.6" cy="71" r="0.85"/><circle cx="15.5" cy="72.6" r="0.85"/></g><g fill="none" stroke="#3c3c3c"><circle cx="133" cy="69.2" r="6.4" stroke-width="1.2"/><g stroke-width="0.8"><circle cx="131" cy="70.3" r="3.3"/><circle cx="135" cy="70.3" r="3.3"/><circle cx="133" cy="67" r="3.3"/></g></g><g fill="#5a5a5a"><rect x="256" y="62.5" width="1.3" height="14"/><rect x="258" y="64.2" width="7.7" height="2.6"/><rect x="258" y="68" width="5.9" height="2.8"/><rect x="258" y="72" width="10.4" height="4"/></g></svg>
<div class="tab" style="left:32.6px;color:#fff;transform:scaleX(0.829)">Trial Accuracy</div>
<div class="tab" style="left:146.7px;transform:scaleX(0.837)">Hyper Parameter</div>
<div class="tab" style="left:276.7px;transform:scaleX(0.852)">Trial Duration</div>
</div>
<div id="alltr">
<svg class="abs" style="left:0;top:0" width="40" height="24" viewBox="3 369 40 24"><g fill="#333"><rect x="16.5" y="374.2" width="15.8" height="1.3"/><rect x="16.5" y="378.1" width="15.8" height="1.3"/><rect x="16.5" y="382.4" width="15.8" height="1.3"/><rect x="16.5" y="386.6" width="15.8" height="1.3"/><rect x="12" y="374.2" width="1" height="1.2"/><rect x="12" y="378.1" width="1" height="1.2"/><rect x="12" y="382.4" width="1" height="1.2"/><rect x="12" y="386.6" width="1" height="1.2"/></g></svg>
<div class="abs nw" style="left:39px;top:0.5px;font-size:11.4px;line-height:24px;color:#333;letter-spacing:-0.13px;-webkit-text-stroke:0.2px #333">All Trials</div>
</div>
<div class="th" style="left:119.3px">Trial No.</div>
<div class="th" style="left:203.5px">Id</div>
<div class="th" style="left:324.4px">Duration</div>
<div class="th" style="left:487.8px">Status</div>
<div class="th" style="left:662.9px">Default Metric</div>
<div class="th" style="left:829.2px">Operation</div>
<div class="th" style="left:969.4px">Tensor</div>
<svg class="abs" style="left:189.6px;top:407.8px" width="6" height="10" viewBox="0 0 6 10"><path d="M0.3,3 L2.6,0 L4.9,3 Z M0.3,5 L2.6,8 L4.9,5 Z" fill="#bfbfbf"/></svg>
<svg class="abs" style="left:254.5px;top:407.8px" width="6" height="10" viewBox="0 0 6 10"><path d="M0.3,3 L2.6,0 L4.9,3 Z M0.3,5 L2.6,8 L4.9,5 Z" fill="#bfbfbf"/></svg>
<svg class="abs" style="left:406.7px;top:407.8px" width="6" height="10" viewBox="0 0 6 10"><path d="M0.3,3 L2.6,0 L4.9,3 Z M0.3,5 L2.6,8 L4.9,5 Z" fill="#bfbfbf"/></svg>
<svg class="abs" style="left:552.2px;top:407.8px" width="6" height="10" viewBox="0 0 6 10"><path d="M0.3,3 L2.6,0 L4.9,3 Z M0.3,5 L2.6,8 L4.9,5 Z" fill="#bfbfbf"/></svg>
<svg class="abs" style="left:788.8px;top:407.8px" width="6" height="10" viewBox="0 0 6 10"><path d="M0.3,3 L2.6,0 L4.9,3 Z M0.3,5 L2.6,8 L4.9,5 Z" fill="#bfbfbf"/></svg>
<svg class="abs" style="left:568px;top:408.8px" width="8" height="7" viewBox="0 0 8 7"><path d="M0.3,0.3 H7.5 L4.7,3.4 V6.4 L3.1,5.6 V3.4 Z" fill="#bfbfbf"/></svg>
<div class="abs" style="left:16px;top:419px;width:1049px;height:1px;background:#e6e6e6"></div>
<div class="row" style="top:420px;height:19px"><div class="plus" style="height:18px"></div><div class="td" style="left:99.3px;width:40px;text-align:center">0</div><div class="td" style="left:184.7px;transform:scaleX(0.86);transform-origin:0 0">ZBIOB</div><div class="td" style="left:320.9px;width:60px;text-align:right;transform:scaleX(0.8);transform-origin:100% 0">10s</div><div class="td suc" style="left:459.6px;transform:scaleX(0.815);transform-origin:0 0">SUCCEEDED</div><div class="td" style="left:656.6px;transform:scaleX(0.928);transform-origin:0 0">0.096000</div><div class="kill">Kill</div><div class="tb">TensorBoard</div></div>
<div class="row" style="top:439px;height:19px"><div class="plus" style="height:18px"></div><div class="td" style="left:99.3px;width:40px;text-align:center">1</div><div class="td" style="left:184.7px;transform:scaleX(0.86);transform-origin:0 0">r6xJw</div><div class="td" style="left:320.9px;width:60px;text-align:right;transform:scaleX(0.8);transform-origin:100% 0">20s</div><div class="td suc" style="left:459.6px;transform:scaleX(0.815);transform-origin:0 0">SUCCEEDED</div><div class="td" style="left:656.6px;transform:scaleX(0.928);transform-origin:0 0">0.582200</div><div class="kill">Kill</div><div class="tb">TensorBoard</div></div>
<div class="row" style="top:458px;height:19px"><div class="plus" style="height:18px"></div><div class="td" style="left:99.3px;width:40px;text-align:center">2</div><div class="td" style="left:184.7px;transform:scaleX(0.86);transform-origin:0 0">iNRqM</div><div class="td" style="left:320.9px;width:60px;text-align:right;transform:scaleX(0.8);transform-origin:100% 0">10s</div><div class="td suc" style="left:459.6px;transform:scaleX(0.815);transform-origin:0 0">SUCCEEDED</div><div class="td" style="left:656.6px;transform:scaleX(0.928);transform-origin:0 0">0.095800</div><div class="kill">Kill</div><div class="tb">TensorBoard</div></div>
<div class="row" style="top:477px;height:19px"><div class="plus" style="height:18px"></div><div class="td" style="left:99.3px;width:40px;text-align:center">3</div><div class="td" style="left:184.7px;transform:scaleX(0.86);transform-origin:0 0">ksFwV</div><div class="td" style="left:320.9px;width:60px;text-align:right;transform:scaleX(0.8);transform-origin:100% 0">15s</div><div class="td suc" style="left:459.6px;transform:scaleX(0.815);transform-origin:0 0">SUCCEEDED</div><div class="td" style="left:656.6px;transform:scaleX(0.928);transform-origin:0 0">0.252400</div><div class="kill">Kill</div><div class="tb">TensorBoard</div></div>
<div class="row" style="top:496px;height:19px"><div class="plus" style="height:18px"></div><div class="td" style="left:99.3px;width:40px;text-align:center">4</div><div class="td" style="left:184.7px;transform:scaleX(0.86);transform-origin:0 0">O4TpI</div><div class="td" style="left:320.9px;width:60px;text-align:right;transform:scaleX(0.8);transform-origin:100% 0">15s</div><div class="td suc" style="left:459.6px;transform:scaleX(0.815);transform-origin:0 0">SUCCEEDED</div><div class="td" style="left:656.6px;transform:scaleX(0.928);transform-origin:0 0">0.477800</div><div class="kill">Kill</div><div class="tb">TensorBoard</div></div>
<div class="row" style="top:515px;height:19px"><div class="plus" style="height:18px"></div><div class="td" style="left:99.3px;width:40px;text-align:center">5</div><div class="td" style="left:184.7px;transform:scaleX(0.86);transform-origin:0 0">iMdi2</div><div class="td" style="left:320.9px;width:60px;text-align:right;transform:scaleX(0.8);transform-origin:100% 0">20s</div><div class="td suc" style="left:459.6px;transform:scaleX(0.815);transform-origin:0 0">SUCCEEDED</div><div class="td" style="left:656.6px;transform:scaleX(0.928);transform-origin:0 0">0.095800</div><div class="kill">Kill</div><div class="tb">TensorBoard</div></div>
<div class="row" style="top:534px;height:19px"><div class="plus" style="height:18px"></div><div class="td" style="left:99.3px;width:40px;text-align:center">6</div><div class="td" style="left:184.7px;transform:scaleX(0.86);transform-origin:0 0">cTYJI</div><div class="td" style="left:320.9px;width:60px;text-align:right;transform:scaleX(0.8);transform-origin:100% 0">15s</div><div class="td suc" style="left:459.6px;transform:scaleX(0.815);transform-origin:0 0">SUCCEEDED</div><div class="td" style="left:656.6px;transform:scaleX(0.928);transform-origin:0 0">0.113500</div><div class="kill">Kill</div><div class="tb">TensorBoard</div></div>
<div class="row" style="top:553px;height:18px"><div class="plus" style="height:17px"></div><div class="td" style="left:99.3px;width:40px;text-align:center">7</div><div class="td" style="left:184.7px;transform:scaleX(0.86);transform-origin:0 0">KGsUR</div><div class="td" style="left:320.9px;width:60px;text-align:right;transform:scaleX(0.8);transform-origin:100% 0">20s</div><div class="td suc" style="left:459.6px;transform:scaleX(0.815);transform-origin:0 0">SUCCEEDED</div><div class="td" style="left:656.6px;transform:scaleX(0.928);transform-origin:0 0">0.101000</div><div class="kill">Kill</div><div class="tb">TensorBoard</div></div>
<div class="row" style="top:571px;height:19px"><div class="plus" style="height:18px"></div><div class="td" style="left:99.3px;width:40px;text-align:center">8</div><div class="td" style="left:184.7px;transform:scaleX(0.86);transform-origin:0 0">Q3xTS</div><div class="td" style="left:320.9px;width:60px;text-align:right;transform:scaleX(0.8);transform-origin:100% 0">15s</div><div class="td suc" style="left:459.6px;transform:scaleX(0.815);transform-origin:0 0">SUCCEEDED</div><div class="td" style="left:656.6px;transform:scaleX(0.928);transform-origin:0 0">0.089200</div><div class="kill">Kill</div><div class="tb">TensorBoard</div></div>
<div class="row" style="top:590px;height:19px"><div class="plus" style="height:18px"></div><div class="td" style="left:99.3px;width:40px;text-align:center">9</div><div class="td" style="left:184.7px;transform:scaleX(0.86);transform-origin:0 0">I2x6R</div><div class="td" style="left:320.9px;width:60px;text-align:right;transform:scaleX(0.8);transform-origin:100% 0">15s</div><div class="td suc" style="left:459.6px;transform:scaleX(0.815);transform-origin:0 0">SUCCEEDED</div><div class="td" style="left:656.6px;transform:scaleX(0.928);transform-origin:0 0">0.393400</div><div class="kill">Kill</div><div class="tb">TensorBoard</div></div>
<div class="pg" style="left:817.4px;color:#c8c8c8;border-color:#e6e6e6"><svg width="8" height="8" viewBox="0 0 8 8" style="position:absolute;left:5.8px;top:6px"><path d="M5.2,0.8 L2.2,4 L5.2,7.2" fill="none" stroke="#c8c8c8" stroke-width="1"/></svg></div>
<div class="pg" style="left:843.3px;color:#5a86bf;border-color:#94b9e6">1</div>
<div class="pg" style="left:869.4px;color:#555;border-color:#e6e6e6">2</div>
<div class="pg" style="left:895.5px;color:#555;border-color:#e6e6e6">3</div>
<div class="pg" style="left:921.6px;color:#555;border-color:#e6e6e6">4</div>
<div class="pg" style="left:947.7px;color:#555;border-color:#e6e6e6">5</div>
<div class="pg" style="left:1000px;color:#555;border-color:#e6e6e6">42</div>
<div class="pg" style="left:1025.8px;color:#555;border-color:#e6e6e6"><svg width="8" height="8" viewBox="0 0 8 8" style="position:absolute;left:5.8px;top:6px"><path d="M2.8,0.8 L5.8,4 L2.8,7.2" fill="none" stroke="#555" stroke-width="1"/></svg></div>
<div class="abs nw" style="left:975.5px;top:619.3px;font-size:8px;line-height:21px;color:#bbb;letter-spacing:1.2px">•••</div>
</body></html>
